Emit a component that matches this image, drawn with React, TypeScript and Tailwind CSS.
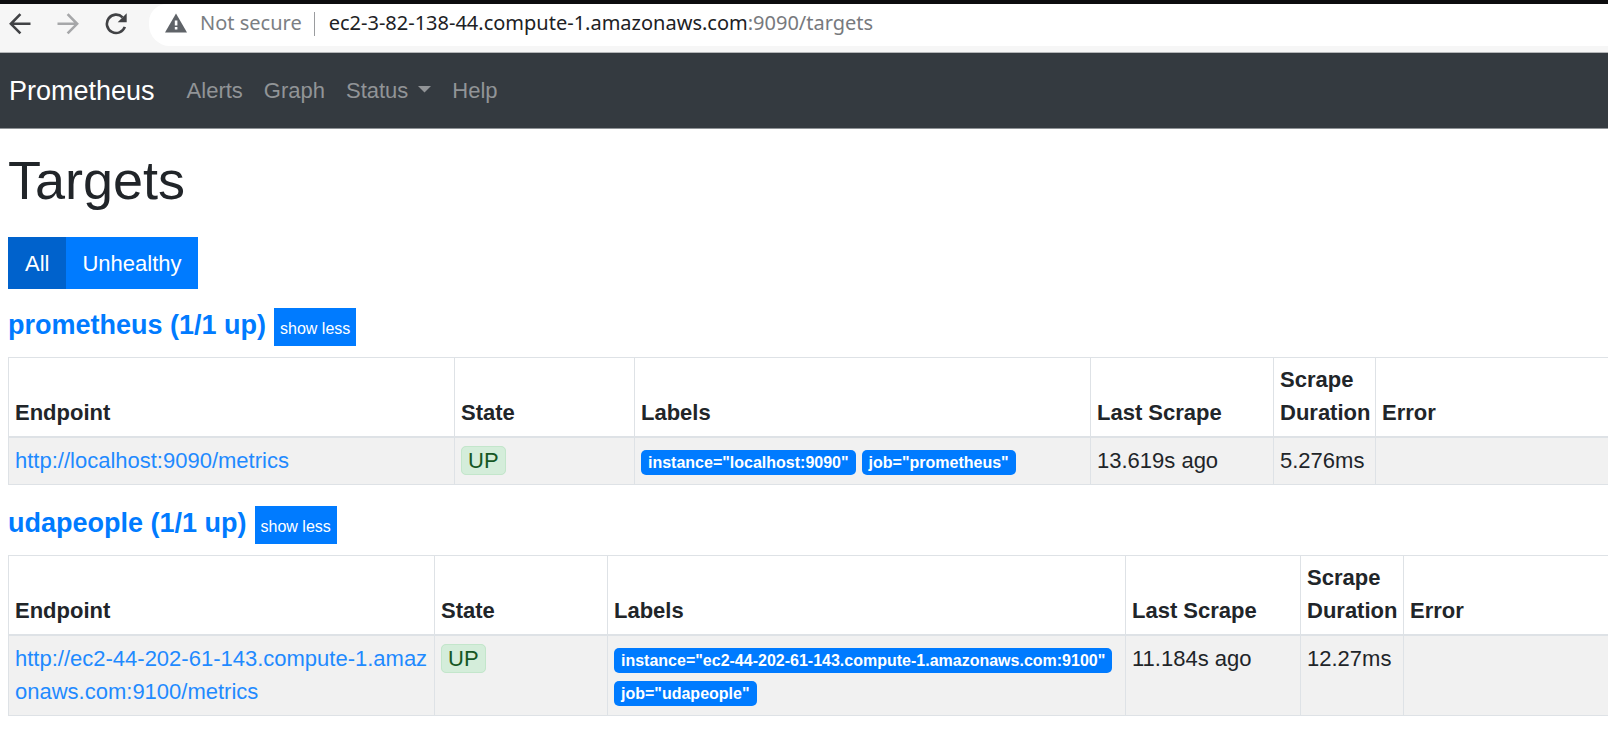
import React from "react";

type Target = {
  endpoint: string;
  labels: string[];
  lastScrape: string;
  duration: string;
};

type Pool = {
  name: string;
  columns: string[];
  target: Target;
};

const pools: Pool[] = [
  {
    name: "prometheus",
    columns: ["w-[446px]", "w-[180px]", "w-[456px]", "w-[183px]", "w-[102px]", ""],
    target: {
      endpoint: "http://localhost:9090/metrics",
      labels: ['instance="localhost:9090"', 'job="prometheus"'],
      lastScrape: "13.619s ago",
      duration: "5.276ms",
    },
  },
  {
    name: "udapeople",
    columns: ["w-[426px]", "w-[173px]", "w-[518px]", "w-[175px]", "w-[103px]", ""],
    target: {
      endpoint: "http://ec2-44-202-61-143.compute-1.amazonaws.com:9100/metrics",
      labels: ['instance="ec2-44-202-61-143.compute-1.amazonaws.com:9100"', 'job="udapeople"'],
      lastScrape: "11.184s ago",
      duration: "12.27ms",
    },
  },
];

const headings = ["Endpoint", "State", "Labels", "Last Scrape", "Scrape Duration", "Error"];

function BrowserBar() {
  return (
    <div className="flex h-[53px] border-t-4 border-b border-t-[#0c0c0e] border-b-[#b4b6b8] bg-[#f6f6f6] font-['Noto_Sans',sans-serif] text-[20px] leading-[38px]">
      <div className="flex w-[149px] shrink-0 items-start gap-[26px] pt-[9px] pl-[9px]">
        <button type="button" aria-label="Back">
          <svg width="22" height="22" viewBox="0 0 22 22" fill="none" stroke="#414245" strokeWidth="2.6">
            <path d="M21.500 10.800H2.400M11.400 1.200L1.900 10.800l9.500 9.600" />
          </svg>
        </button>
        <button type="button" aria-label="Forward">
          <svg width="22" height="22" viewBox="0 0 22 22" fill="none" stroke="#a6a7a9" strokeWidth="2.600">
            <path d="M0.500 10.800H19.600M10.600 1.200L20.100 10.800l-9.500 9.600" />
          </svg>
        </button>
        <button type="button" aria-label="Reload">
          <svg width="22" height="22" viewBox="0 0 22 22" fill="none">
            <path d="M19.800 13.800A9.200 9.200 0 1 1 17.600 4.300" stroke="#414245" strokeWidth="2.600" />
            <path d="M21.700 0.200V9.200H12.700Z" fill="#414245" />
          </svg>
        </button>
      </div>
      <div className="flex h-[42px] min-w-0 grow items-start rounded-bl-[21px] rounded-tl-[18px] bg-white pl-4">
        <svg className="mt-[9px] shrink-0" width="22" height="20" viewBox="0 0 22 20">
          <path d="M11 0.500L22 19.500H0Z" fill="#5f6368" />
          <path d="M9.800 7.500h2.600v5H9.800zM9.800 14h2.600v2.600H9.800z" fill="#fff" />
        </svg>
        <span className="ml-[13px] whitespace-nowrap text-[#7b7e83]">Not secure</span>
        <span className="mt-[8px] ml-3 h-6 w-px shrink-0 bg-[#9a9c9f]" />
        <span className="ml-[14px] whitespace-nowrap text-[#77797d]">
          <span className="text-[#202124]">ec2-3-82-138-44.compute-1.amazonaws.com</span>:9090/targets
        </span>
      </div>
    </div>
  );
}

function NavBar() {
  return (
    <nav className="flex h-[76px] items-center border-b border-[#8f9397] bg-[#343a40] pl-[9px] text-[#919497]">
      <a href="#" className="mr-8 text-[27px] leading-[40px] text-white">Prometheus</a>
      <div className="flex gap-[21px]">
        <a href="#alerts">Alerts</a>
        <a href="#graph">Graph</a>
        <button type="button" className="flex items-center">
          Status
          <svg className="ml-[10px]" width="13" height="9" viewBox="0 0 13 9" fill="#919497">
            <path d="M0 0h13L6.500 6.500z" />
          </svg>
        </button>
        <a href="#help">Help</a>
      </div>
    </nav>
  );
}

function PoolSection({ pool }: { pool: Pool }) {
  const { target } = pool;
  const cell = "border border-[#dee2e6] px-[6px] pt-[6px] pb-[7px] align-top";
  return (
    <section>
      <div className="mb-[11px] flex h-[38px] items-start">
        <h2 className="text-[27px] leading-[35px] font-bold text-[#007bff]">
          <a href={"#pool-" + pool.name}>{pool.name} (1/1 up)</a>
        </h2>
        <button type="button" className="ml-2 h-[38px] bg-[#007bff] px-[6px] pt-[4px] text-[16px] leading-[24px] text-white">
          show less
        </button>
      </div>
      <table className="mb-[21px] w-full table-fixed border-collapse">
        <colgroup>
          {pool.columns.map((width, i) => (
            <col key={i} className={width} />
          ))}
        </colgroup>
        <thead>
          <tr>
            {headings.map((heading) => (
              <th key={heading} className="border border-b-2 border-[#dee2e6] px-[6px] pt-[5px] pb-[7px] text-left align-bottom font-bold">
                {heading}
              </th>
            ))}
          </tr>
        </thead>
        <tbody>
          <tr className="bg-[#f1f1f1]">
            <td className={cell}>
              <a href="#endpoint" className="break-all text-[#1f8aff]">{target.endpoint}</a>
            </td>
            <td className={cell}>
              <span className="rounded-[5px] border border-[#c3e6cb] bg-[#d4edda] px-[6px] py-px text-[#155724]">UP</span>
            </td>
            <td className={cell}>
              <div className="flex flex-wrap gap-x-[6px]">
                {target.labels.map((label) => (
                  <span key={label} className="flex h-[33px] items-center pt-1">
                    <span className="rounded-[5px] bg-[#007bff] px-[7px] text-[16px] leading-[25px] font-bold whitespace-nowrap text-white">
                      {label}
                    </span>
                  </span>
                ))}
              </div>
            </td>
            <td className={cell}>{target.lastScrape}</td>
            <td className={cell}>{target.duration}</td>
            <td className={cell}></td>
          </tr>
        </tbody>
      </table>
    </section>
  );
}

export default function App() {
  return (
    <div className="min-h-screen overflow-x-hidden bg-white font-['Liberation_Sans',Arial,sans-serif] text-[22px] leading-[33px] text-[#212529]">
      <BrowserBar />
      <NavBar />
      <main className="-mr-2 pt-[18px] pl-2">
        <h1 className="mb-6 text-[54px] leading-[66px]">Targets</h1>
        <div className="mb-[19px] flex text-white">
          <button type="button" className="h-[52px] bg-[#0062cc] px-[17px]">All</button>
          <button type="button" className="h-[52px] bg-[#007bff] px-4">Unhealthy</button>
        </div>
        {pools.map((pool) => (
          <PoolSection key={pool.name} pool={pool} />
        ))}
      </main>
    </div>
  );
}
